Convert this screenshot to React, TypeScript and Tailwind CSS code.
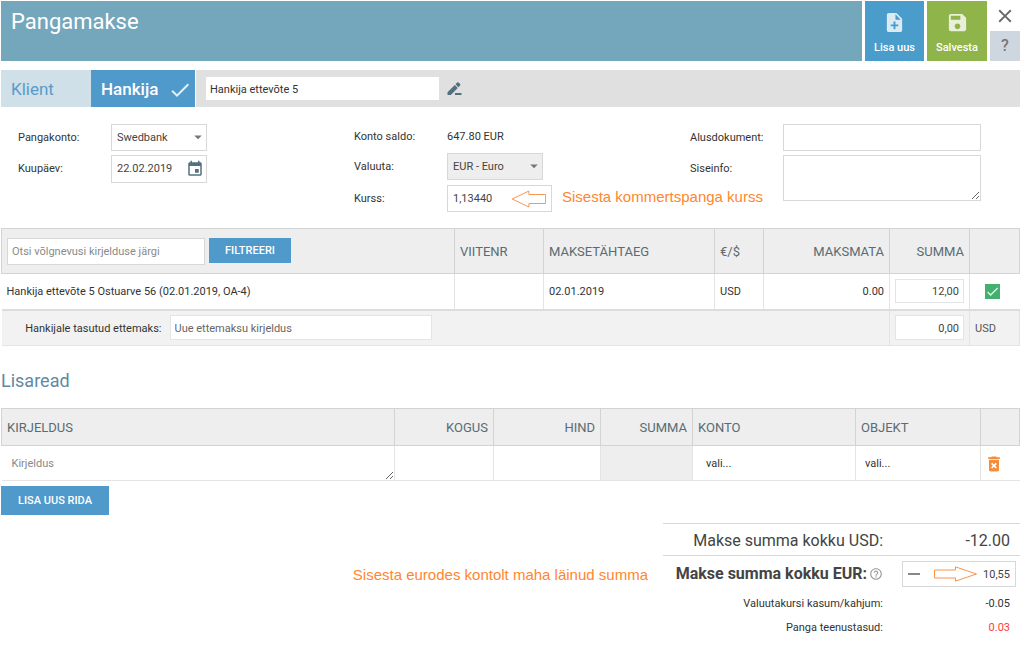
import type { ReactNode } from "react";
import {
  MdArrowDropDown,
  MdCheck,
  MdClose,
  MdDeleteForever,
  MdEvent,
  MdHelpOutline,
  MdNoteAdd,
  MdSave,
} from "react-icons/md";

const frame = "border border-[#d8d8d8] text-[11px] text-[#444] outline-none";
const box = `${frame} bg-white`;
const softBox = "border border-[#e4e4e4] bg-white text-[11px] text-[#444] outline-none";
const th = "border border-[#d3d3d3] px-[5px] pt-0.5 font-normal text-[13px] text-[#5a6b72]";
const td = "border border-[#e4e4e4] px-[5px]";
const tdText = `${td} pt-0.5`;

function Select({ id, value, grey }: { id: string; value: string; grey?: boolean }) {
  return (
    <div className="relative w-24">
      <select
        id={id}
        className={`h-[27px] w-full appearance-none px-[5px] pt-0.5 ${frame} ${grey ? "bg-[#eee]" : "bg-white"}`}
      >
        <option>{value}</option>
      </select>
      <MdArrowDropDown className="pointer-events-none absolute top-1 right-0 size-[18px] text-[#777]" />
    </div>
  );
}

function Field({ id, label, children }: { id: string; label: string; children: ReactNode }) {
  return (
    <div className="flex">
      <label htmlFor={id} className="w-[93px] shrink-0 pt-1.5 leading-4">
        {label}
      </label>
      {children}
    </div>
  );
}

function Arrow({ className }: { className: string }) {
  return (
    <svg
      viewBox="0 0 44 18"
      preserveAspectRatio="none"
      className={className}
      fill="none"
      stroke="#f98b3f"
      aria-hidden="true"
    >
      <path d="M.5 4.500h21V1l21 8-21 8v-3.500h-21z" />
    </svg>
  );
}

export default function App() {
  return (
    <main className="min-h-screen bg-white pt-px pr-1 pb-3 pl-px font-[Roboto,sans-serif] text-[11px] text-[#333]">
      <header className="flex h-[60px] gap-[3px]">
        <h1 className="flex-1 bg-[#74a7bc] px-2.5 pt-[5px] text-[22px] leading-8 text-white">Pangamakse</h1>
        <button className="flex w-[59px] flex-col items-center bg-[#4a9cca] pt-2.5 text-white">
          <MdNoteAdd className="size-[23px] opacity-80" />
          <span className="pt-1.5 font-medium leading-4">Lisa uus</span>
        </button>
        <button className="flex w-[60px] flex-col items-center bg-[#8fb44a] pt-2.5 text-white">
          <MdSave className="size-[23px] opacity-80" />
          <span className="pt-1.5 font-medium leading-4">Salvesta</span>
        </button>
        <div className="flex w-[30px] flex-col">
          <button aria-label="Sulge" className="flex h-[30px] items-center justify-center text-[#666]">
            <MdClose className="size-[22px]" />
          </button>
          <button className="h-[30px] bg-[#ced7df] text-base font-medium text-[#777]">?</button>
        </div>
      </header>

      <div className="mt-[9px] flex h-[37px]">
        <button className="w-[90px] bg-[#cfe0e8] px-2.5 pt-0.5 text-left text-[17px] text-[#5a9bc9]">Klient</button>
        <button className="flex w-[104px] items-center justify-between bg-[#5099cb] pt-0.5 pr-[3px] pl-2.5 text-[17px] font-medium text-white">
          Hankija
          <MdCheck className="size-6 opacity-85" />
        </button>
        <div className="ml-px flex flex-1 items-center gap-2 bg-[#e0e0e0] pl-2.5">
          <input
            aria-label="Hankija nimi"
            defaultValue="Hankija ettevõte 5"
            className="h-[23px] w-[233px] bg-white px-1 pt-0.5 outline-none"
          />
          <button aria-label="Muuda" className="text-[#53707e]">
            <svg viewBox="0 0 16 16" className="size-4" fill="currentColor">
              <path d="M.500 11.300 7.800 4l3 3-7 7H.500zM8.500 3.300l1.700-1.700q.7-.6 1.400 0l1.500 1.500q.6.700 0 1.400l-1.700 1.700zM8 12h6.500v2H8z" />
            </svg>
          </button>
        </div>
      </div>

      <section className="mt-[17px] grid min-h-[104px] grid-cols-[minmax(0,1fr)_minmax(0,1fr)_330px] items-start pl-[17px]">
        <div className="flex flex-col gap-1">
          <Field id="konto" label="Pangakonto:">
            <Select id="konto" value="Swedbank" />
          </Field>
          <Field id="kuupaev" label="Kuupäev:">
            <div className={`flex h-7 w-24 items-center pl-[5px] ${box}`}>
              <input id="kuupaev" defaultValue="22.02.2019" className="w-[69px] outline-none" />
              <button aria-label="Vali kuupäev" className="text-[#53707e]">
                <MdEvent className="size-[18px]" />
              </button>
            </div>
          </Field>
        </div>
        <div className="flex flex-col gap-[5px]">
          <div className="flex h-6 pt-px leading-6">
            <span className="w-[93px] shrink-0">Konto saldo:</span>
            <span>647.80 EUR</span>
          </div>
          <Field id="valuuta" label="Valuuta:">
            <Select id="valuuta" value="EUR - Euro" grey />
          </Field>
          <Field id="kurss" label="Kurss:">
            <div className={`flex h-[27px] w-[105px] shrink-0 items-center pl-[5px] ${box}`}>
              <input id="kurss" defaultValue="1,13440" className="w-[58px] pt-0.5 outline-none" />
              <Arrow className="h-[18px] w-[35px] rotate-180" />
            </div>
            <span className="ml-2.5 font-['Liberation_Sans',sans-serif] text-[15px] leading-6 whitespace-nowrap text-[#ff862f]">
              Sisesta kommertspanga kurss
            </span>
          </Field>
        </div>
        <div className="flex flex-col gap-1">
          <Field id="alus" label="Alusdokument:">
            <input id="alus" className={`h-[27px] w-[198px] px-[5px] ${box}`} />
          </Field>
          <Field id="sise" label="Siseinfo:">
            <textarea id="sise" className={`h-[46px] w-[198px] px-[5px] ${box}`} />
          </Field>
        </div>
      </section>

      <table className="w-full table-fixed border-collapse">
        <colgroup>
          <col />
          <col className="w-[89px]" />
          <col className="w-[171px]" />
          <col className="w-[49px]" />
          <col className="w-[126px]" />
          <col className="w-20" />
          <col className="w-[50px]" />
        </colgroup>
        <thead>
          <tr className="h-[45px] bg-[#eee] text-left">
            <th className="border border-[#d3d3d3] px-[5px] font-normal">
              <div className="flex gap-1">
                <input
                  aria-label="Otsi võlgnevusi"
                  placeholder="Otsi võlgnevusi kirjelduse järgi"
                  className={`h-[27px] w-[198px] px-1 pt-px placeholder:text-[#8a8a8a] ${box}`}
                />
                <button className="h-[25px] w-[82px] bg-[#5099cb] pt-0.5 text-[11px] font-medium text-white">
                  FILTREERI
                </button>
              </div>
            </th>
            <th className={th}>VIITENR</th>
            <th className={th}>MAKSETÄHTAEG</th>
            <th className={th}>€/$</th>
            <th className={`${th} text-right`}>MAKSMATA</th>
            <th className={`${th} text-right`}>SUMMA</th>
            <th className={th} aria-label="Valitud" />
          </tr>
        </thead>
        <tbody>
          <tr className="h-9">
            <td className={`${tdText} border-l-0`}>Hankija ettevõte 5 Ostuarve 56 (02.01.2019, OA-4)</td>
            <td className={td} />
            <td className={tdText}>02.01.2019</td>
            <td className={tdText}>USD</td>
            <td className={`${tdText} text-right`}>0.00</td>
            <td className={td}>
              <input aria-label="Summa" defaultValue="12,00" className={`h-6 w-full px-1 pt-px text-right ${softBox}`} />
            </td>
            <td className={`${td} border-r-0`}>
              <label className="relative ml-2.5 block size-[15px]">
                <input
                  type="checkbox"
                  aria-label="Vali arve"
                  defaultChecked
                  className="block size-[15px] appearance-none bg-[#b5b5b5] checked:bg-[#43b070]"
                />
                <MdCheck className="pointer-events-none absolute inset-0 size-[15px] text-[#e2f4e9]" />
              </label>
            </td>
          </tr>
          <tr className="h-9 border-t-2 border-t-[#dcdcdc] bg-[#f2f2f2]">
            <td colSpan={5} className="border-b border-[#e4e4e4] pl-[18px]">
              <div className="flex items-center gap-2">
                <label htmlFor="ettemaks" className="w-[142px] shrink-0 pt-0.5 text-right">
                  Hankijale tasutud ettemaks:
                </label>
                <input
                  id="ettemaks"
                  placeholder="Uue ettemaksu kirjeldus"
                  className={`h-[25px] w-[262px] px-1 pt-px placeholder:text-[#666] ${softBox}`}
                />
              </div>
            </td>
            <td className="border-x border-b border-[#e4e4e4] px-[5px]">
              <input aria-label="Ettemaksu summa" defaultValue="0,00" className={`h-[25px] w-full px-1 pt-px text-right ${softBox}`} />
            </td>
            <td className="border-x border-b border-[#e4e4e4] px-[5px] pt-0.5 text-[#555]">USD</td>
          </tr>
        </tbody>
      </table>

      <h2 className="mt-[23px] text-lg leading-6 text-[#6189a3]">Lisaread</h2>

      <table className="mt-[15px] w-full table-fixed border-collapse">
        <colgroup>
          <col />
          <col className="w-[99px]" />
          <col className="w-[107px]" />
          <col className="w-[92px]" />
          <col className="w-[163px]" />
          <col className="w-[125px]" />
          <col className="w-[39px]" />
        </colgroup>
        <thead>
          <tr className="h-[37px] bg-[#eee] text-left">
            <th className={th}>KIRJELDUS</th>
            <th className={`${th} text-right`}>KOGUS</th>
            <th className={`${th} text-right`}>HIND</th>
            <th className={`${th} text-right`}>SUMMA</th>
            <th className={th}>KONTO</th>
            <th className={th}>OBJEKT</th>
            <th className={th} aria-label="Kustuta" />
          </tr>
        </thead>
        <tbody>
          <tr className="h-[35px]">
            <td className="border-b border-[#e4e4e4] p-0">
              <textarea
                aria-label="Kirjeldus"
                placeholder="Kirjeldus"
                className="block h-[34px] w-full px-2.5 pt-2.5 pb-2 leading-4 outline-none placeholder:text-[#888]"
              />
            </td>
            <td className={td}>
              <input aria-label="Kogus" className="w-full outline-none" />
            </td>
            <td className={td}>
              <input aria-label="Hind" className="w-full outline-none" />
            </td>
            <td className={`${td} bg-[#eee]`} />
            <td className={tdText}>
              <select aria-label="Konto" className="w-full appearance-none pl-2 outline-none">
                <option>vali...</option>
              </select>
            </td>
            <td className={tdText}>
              <select aria-label="Objekt" className="w-full appearance-none pl-1 outline-none">
                <option>vali...</option>
              </select>
            </td>
            <td className="border-b border-l border-[#e4e4e4] pt-0.5 pl-[3px]">
              <button aria-label="Kustuta rida" className="block text-[#f68d3c]">
                <MdDeleteForever className="size-5" />
              </button>
            </td>
          </tr>
        </tbody>
      </table>
      <button className="mt-[5px] h-[29px] w-[108px] bg-[#5099cb] pt-0.5 text-[11px] font-medium text-white">
        LISA UUS RIDA
      </button>

      <section className="mt-2 flex justify-end">
        <p className="mt-10 mr-[15px] font-['Liberation_Sans',sans-serif] text-[15px] leading-6 text-[#ff862f]">
          Sisesta eurodes kontolt maha läinud summa
        </p>
        <dl className="grid w-[357px] grid-cols-[220px_1fr] text-right">
          <dt className="h-8 border-t border-[#d8d8d8] text-base leading-[34px] text-[#444]">Makse summa kokku USD:</dt>
          <dd className="h-8 border-t border-[#d8d8d8] pr-2.5 text-base leading-[34px] text-[#444]">-12.00</dd>
          <dt className="flex h-[37px] items-center justify-end gap-0.5 border-t border-[#d8d8d8] text-base font-bold text-[#444]">
            <label htmlFor="kokku">Makse summa kokku EUR:</label>
            <MdHelpOutline className="size-3.5 text-[#999]" />
          </dt>
          <dd className="flex h-[37px] items-center justify-end border-t border-[#d8d8d8] pr-1">
            <div className={`flex h-[26px] w-[114px] items-center px-[5px] ${box}`}>
              <span className="h-0.5 w-3 bg-[#888]" />
              <Arrow className="ml-auto h-4 w-11 shrink-0" />
              <input id="kokku" defaultValue="10,55" className="w-8 pt-0.5 text-right outline-none" />
            </div>
          </dd>
          <dt className="leading-6">Valuutakursi kasum/kahjum:</dt>
          <dd className="pr-2.5 leading-6">-0.05</dd>
          <dt className="leading-6">Panga teenustasud:</dt>
          <dd className="pr-2.5 leading-6 text-[#ff3b3b]">0.03</dd>
        </dl>
      </section>
    </main>
  );
}
